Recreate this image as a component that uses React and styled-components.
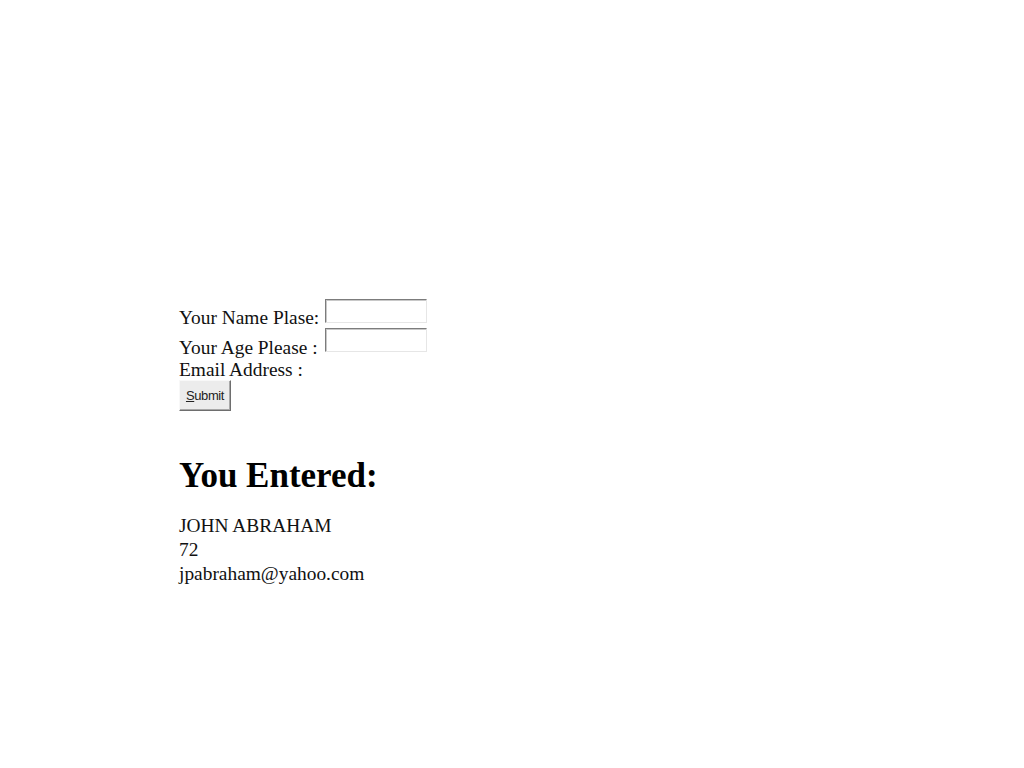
import React from "react"
import styled, { createGlobalStyle } from "styled-components"

const GlobalStyle = createGlobalStyle`
  html, body {
    margin: 0;
    padding: 0;
    background: #ffffff;
  }
  body {
    font-family: "Liberation Serif", "Times New Roman", serif;
    color: #111111;
  }
`

// Styles
const Page = styled.div`
  padding: 299px 0 0 179px;
  font-size: 19.4px;
`

const Form = styled.form`
  display: flex;
  flex-direction: column;
  align-items: flex-start;
`

const Row = styled.div`
  display: flex;
  align-items: flex-end;
  height: ${(p) => p.h}px;
`

const Label = styled.label`
  line-height: 18px;
  white-space: pre;
  width: ${(p) => (p.w ? `${p.w}px` : "auto")};
`

const Field = styled.input`
  box-sizing: border-box;
  width: 102px;
  height: 24px;
  margin: 0 0 ${(p) => p.mb}px 0;
  padding: 0;
  background: #ffffff;
  border: 1px solid;
  border-color: #7c7c7c #e6e6e6 #e6e6e6 #7c7c7c;
  box-shadow: inset 1px 1px 0 #c8c8c8;
  outline: none;
`

const SubmitButton = styled.button`
  box-sizing: border-box;
  width: 52px;
  height: 31px;
  margin-top: 1px;
  padding: 0;
  background: #ececec;
  border: 1px solid;
  border-color: #f8f8f8 #6e6e6e #6e6e6e #f8f8f8;
  box-shadow: inset -1px -1px 0 #a8a8a8;
  font-family: "Liberation Sans", Arial, sans-serif;
  font-size: 13px;
  letter-spacing: -0.4px;
  color: #222222;
  cursor: pointer;

  u {
    text-decoration: underline;
  }
`

const Heading = styled.h2`
  margin: 45px 0 0 0;
  font-size: 35px;
  line-height: 40px;
  font-weight: bold;
  color: #000000;
`

const Results = styled.div`
  margin-top: 18px;
  line-height: 24px;
`

const ResultLine = styled.div``

const entered = ["JOHN ABRAHAM", "72", "jpabraham@yahoo.com"]

const App = () => {
  return (
    <Page>
      <GlobalStyle />
      <Form onSubmit={(e) => e.preventDefault()}>
        <Row h={28}>
          <Label w={146}>Your Name Plase:</Label>
          <Field type="text" mb={4} />
        </Row>
        <Row h={30}>
          <Label w={146}>Your Age Please :</Label>
          <Field type="text" mb={5} />
        </Row>
        <Row h={22}>
          <Label>Email Address :</Label>
        </Row>
        <SubmitButton type="submit">
          <u>S</u>ubmit
        </SubmitButton>
      </Form>
      <Heading>You Entered:</Heading>
      <Results>
        {entered.map((item, index) => (
          <ResultLine key={index}>{item}</ResultLine>
        ))}
      </Results>
    </Page>
  )
}

export default App
